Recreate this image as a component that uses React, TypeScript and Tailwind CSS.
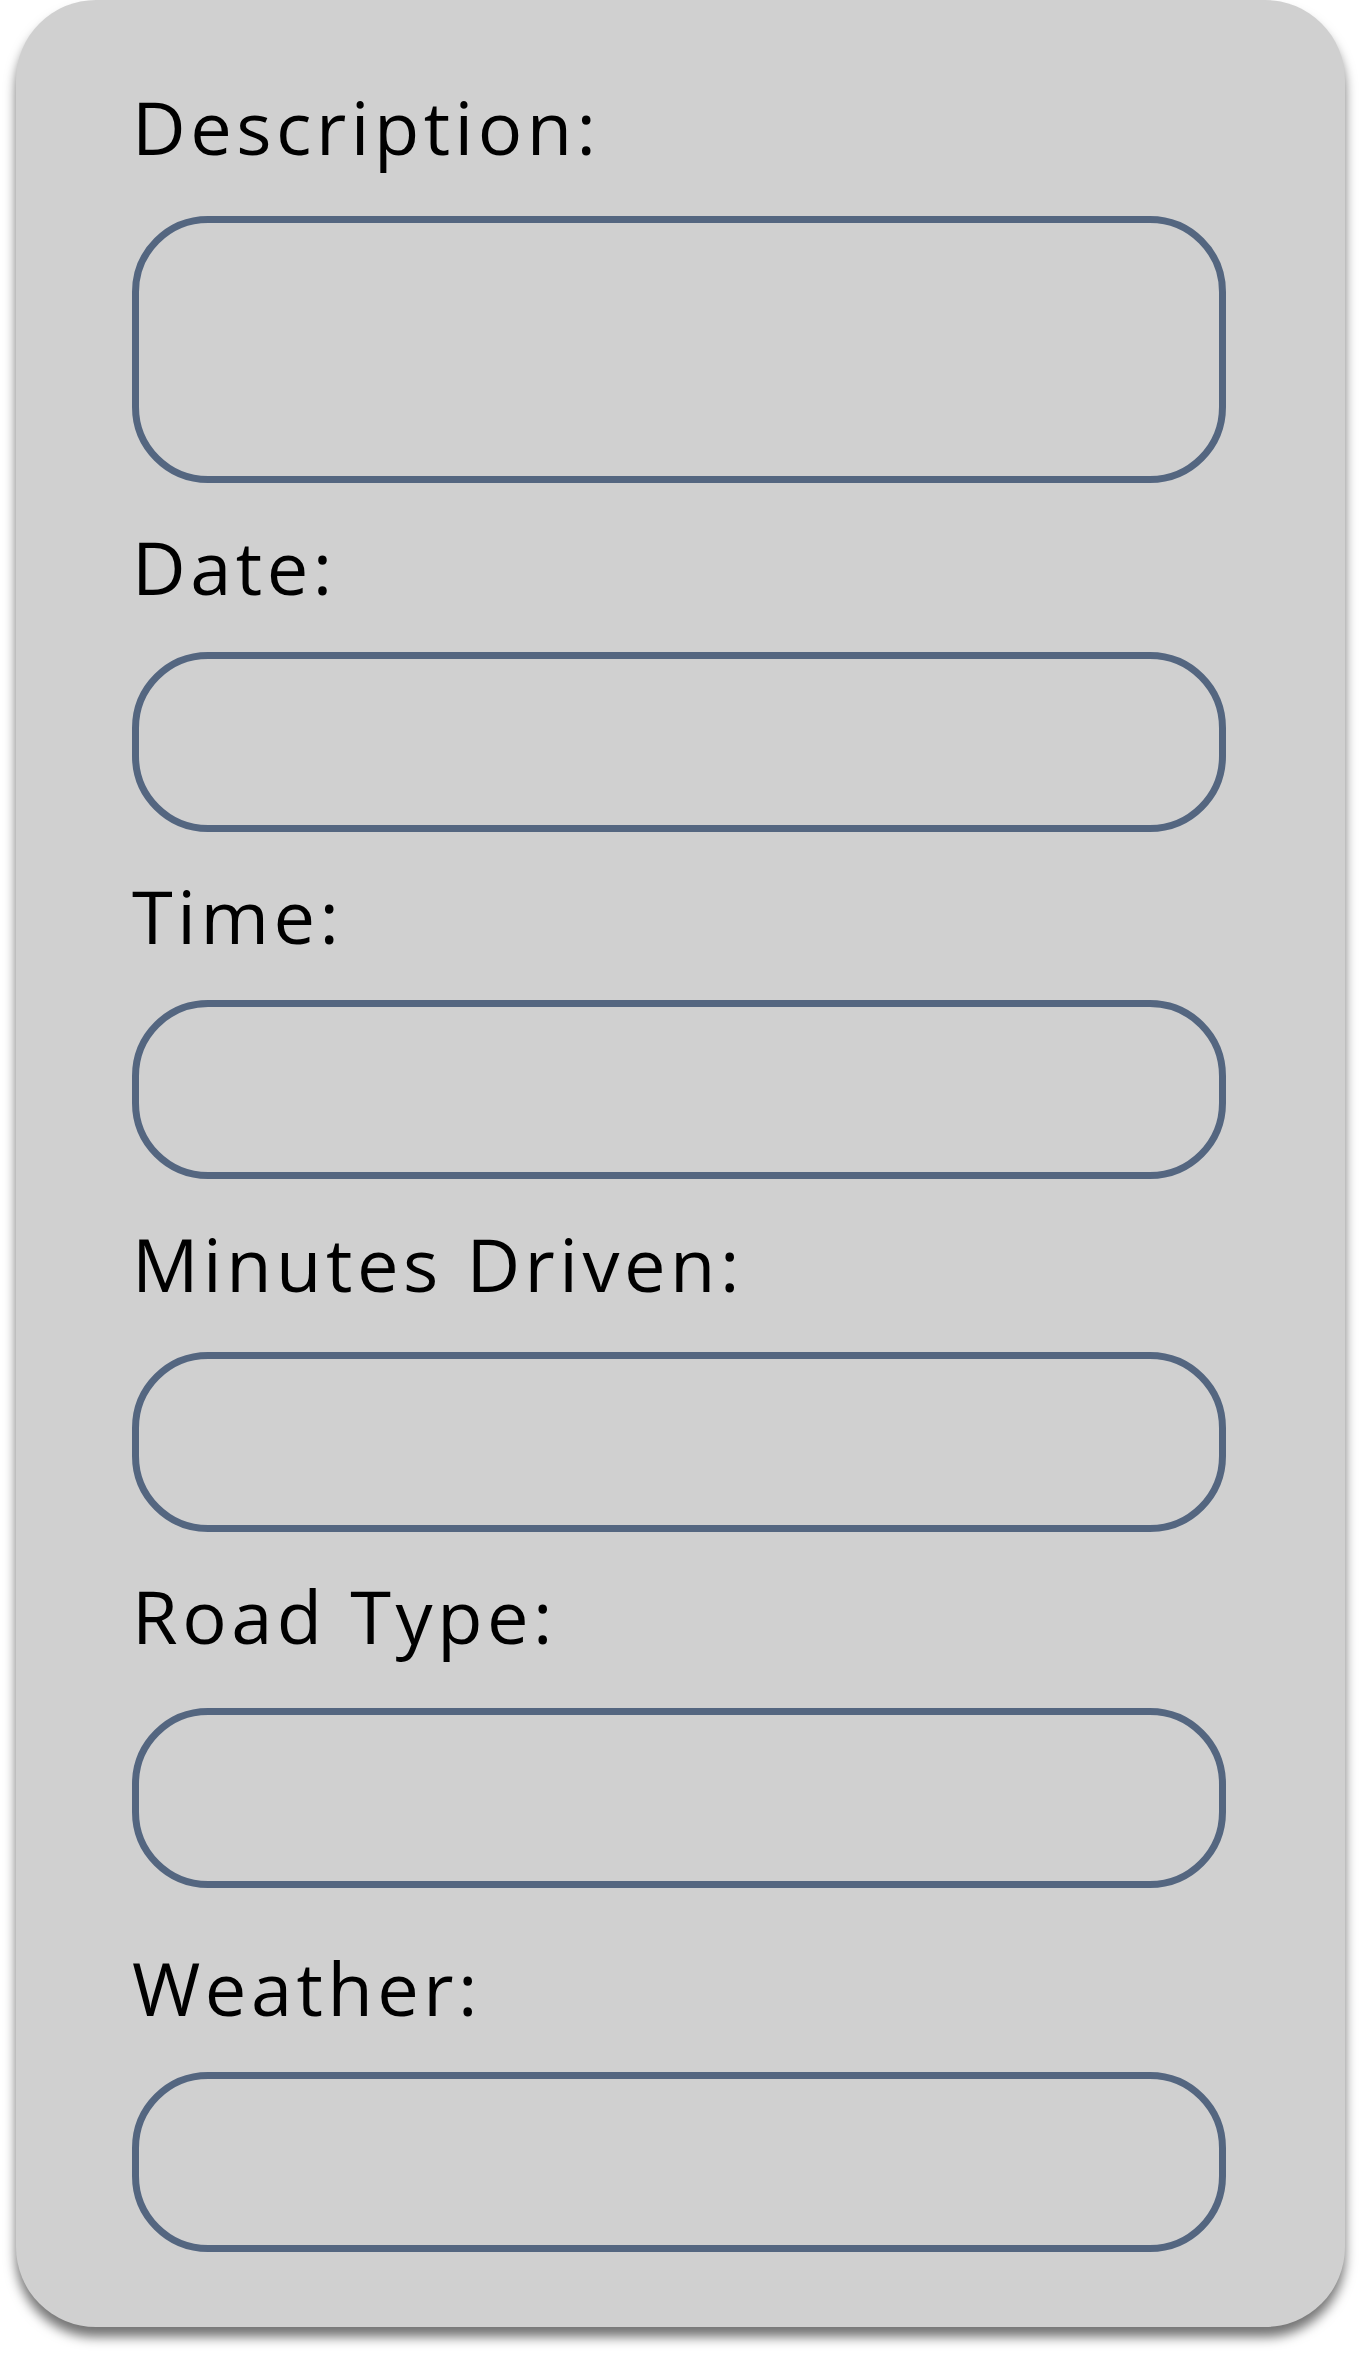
import React from "react";

type Field = { label: string; labelMt: string; inputMt: string; h: string };

const fields: Field[] = [
  { label: "Description:", labelMt: "mt-0", inputMt: "mt-[52px]", h: "h-[267px]" },
  { label: "Date:", labelMt: "mt-[47px]", inputMt: "mt-[48px]", h: "h-[180px]" },
  { label: "Time:", labelMt: "mt-[47px]", inputMt: "mt-[47px]", h: "h-[179px]" },
  { label: "Minutes Driven:", labelMt: "mt-[48px]", inputMt: "mt-[51px]", h: "h-[180px]" },
  { label: "Road Type:", labelMt: "mt-[47px]", inputMt: "mt-[55px]", h: "h-[180px]" },
  { label: "Weather:", labelMt: "mt-[63px]", inputMt: "mt-[47px]", h: "h-[180px]" },
];

export default function App() {
  return (
    <div className="w-[1360px] h-[2360px] bg-white">
      <div className="ml-[16px] w-[1329px] h-[2327px] bg-[#d0d0d0] rounded-[80px] shadow-[0_10px_12px_rgba(0,0,0,0.55)] pt-[90px] pl-[116px] pr-[119px] flex flex-col">
        {fields.map((f) => (
          <React.Fragment key={f.label}>
            <div
              className={`${f.labelMt} h-[74px] text-[74px] leading-none text-black tracking-[4.5px] whitespace-nowrap`}
              style={{ fontFamily: '"Open Sans", sans-serif' }}
            >
              {f.label}
            </div>
            <div
              className={`${f.inputMt} ${f.h} w-full rounded-[76px] border-[7px] border-[#546680]`}
            />
          </React.Fragment>
        ))}
      </div>
    </div>
  );
}
